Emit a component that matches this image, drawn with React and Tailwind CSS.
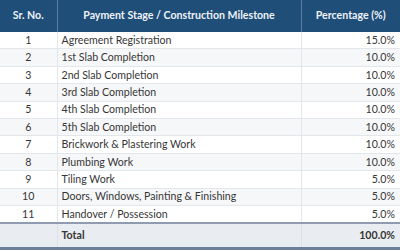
const rows = [
  ['1', 'Agreement Registration', '15.0%'],
  ['2', '1st Slab Completion', '10.0%'],
  ['3', '2nd Slab Completion', '10.0%'],
  ['4', '3rd Slab Completion', '10.0%'],
  ['5', '4th Slab Completion', '10.0%'],
  ['6', '5th Slab Completion', '10.0%'],
  ['7', 'Brickwork & Plastering Work', '10.0%'],
  ['8', 'Plumbing Work', '10.0%'],
  ['9', 'Tiling Work', '5.0%'],
  ['10', 'Doors, Windows, Painting & Finishing', '5.0%'],
  ['11', 'Handover / Possession', '5.0%'],
];

export default function App() {
  return (
    <div className="w-[400px] h-[251px] bg-white overflow-hidden text-[#363636] text-[10.6px]" style={{ fontFamily: 'Lato, "Open Sans", sans-serif' }}>
      <table className="w-full border-collapse table-fixed">
        <colgroup>
          <col className="w-[57px]" />
          <col className="w-[244px]" />
          <col />
        </colgroup>
        <thead>
          <tr className="h-[31.5px] bg-[#1f4e79] text-[#eef2f7]">
            <th className="border-r border-[#5a7ea3] text-center font-bold">Sr. No.</th>
            <th className="border-r border-[#5a7ea3] text-center font-bold">Payment Stage / Construction Milestone</th>
            <th className="text-center font-bold">Percentage (%)</th>
          </tr>
        </thead>
        <tbody>
          {rows.map((r, i) => (
            <tr key={r[0]} className={`h-[17.4px] border-b border-[#e3e6ea] ${i % 2 ? 'bg-[#f6f7f9]' : 'bg-white'}`}>
              <td className="border-r border-[#e3e6ea] text-center p-0 leading-none">{r[0]}</td>
              <td className="border-r border-[#e3e6ea] pl-[4px] p-0 leading-none">{r[1]}</td>
              <td className="text-right pr-[5px] p-0 leading-none">{r[2]}</td>
            </tr>
          ))}
          <tr className="h-[26px] bg-[#e9ecf0] border-t-2 border-b-[3px] border-t-[#8f9cb0] border-b-[#6c7f98] font-bold">
            <td className="border-r border-[#dde1e6]"></td>
            <td className="border-r border-[#dde1e6] pl-[4px]">Total</td>
            <td className="text-right pr-[5px]">100.0%</td>
          </tr>
        </tbody>
      </table>
    </div>
  );
}
